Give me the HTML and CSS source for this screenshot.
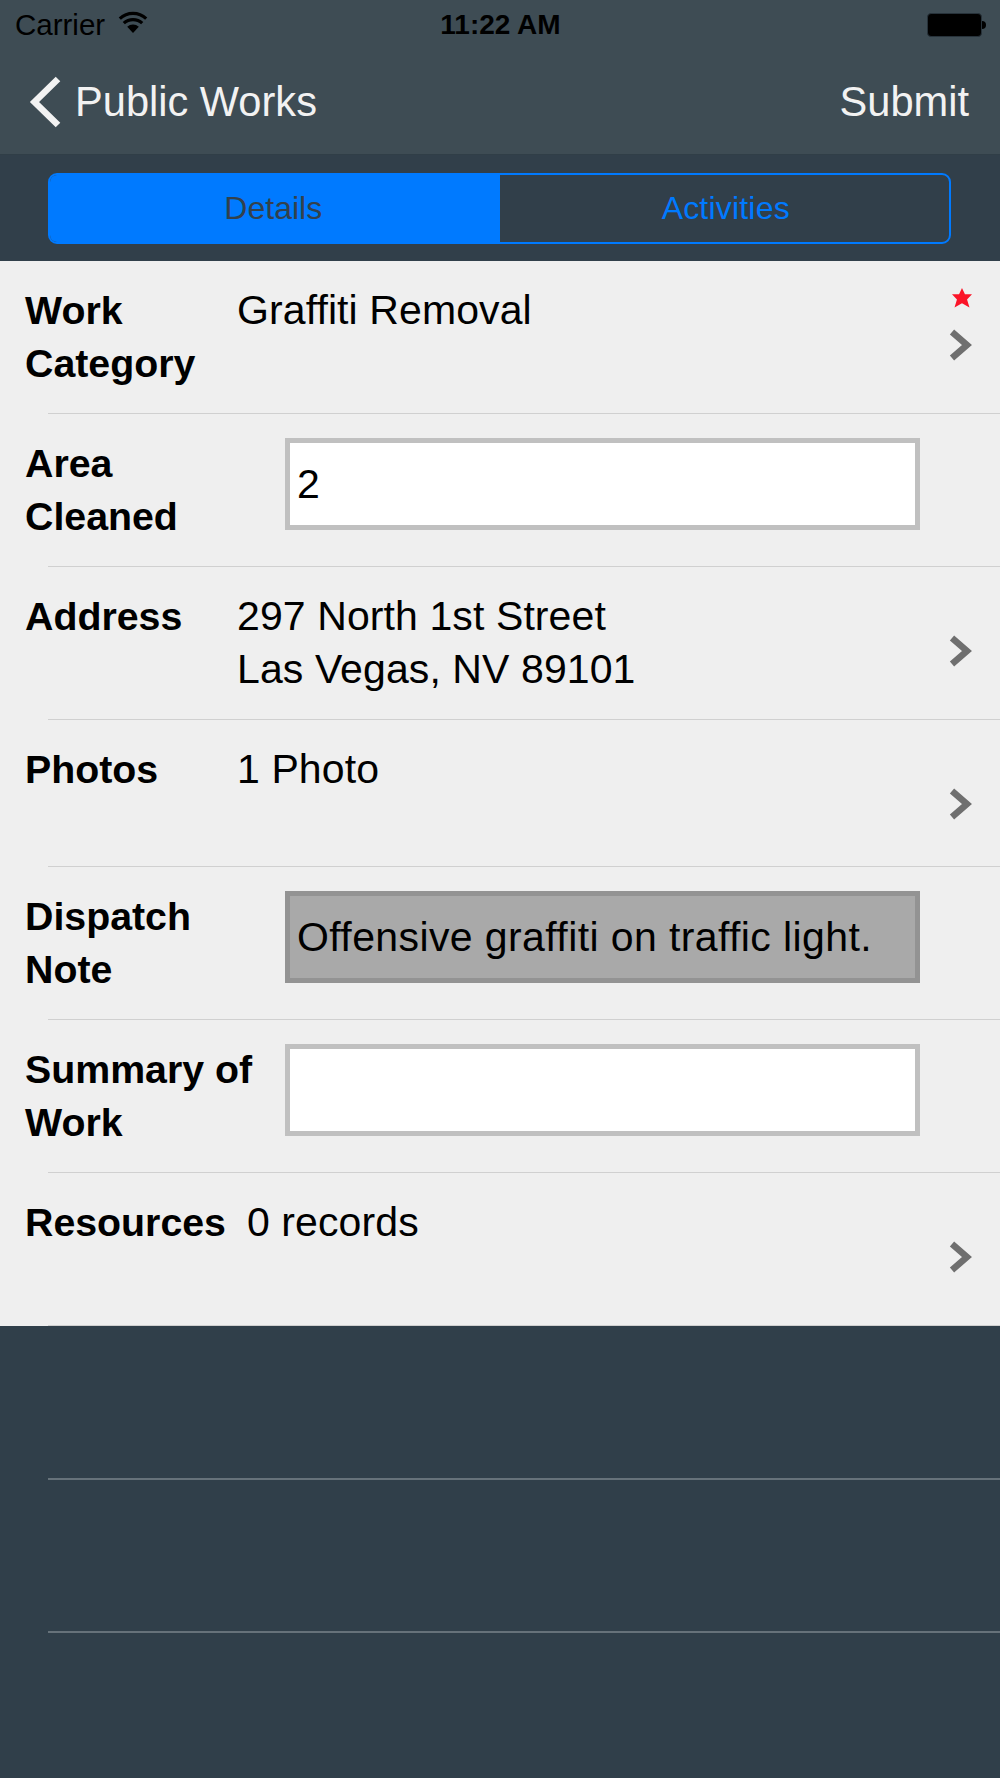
FILE: index.html
```html
<!DOCTYPE html>
<html lang="en">
<head>
<meta charset="utf-8">
<title>Public Works</title>
<link rel="stylesheet" href="styles.css">
</head>
<body>
<header class="top">
  <div class="status">
    <div class="status-left">
      <span class="carrier">Carrier</span>
      <svg class="wifi" width="30" height="24" viewBox="0 0 30 24"><path d="M15 23 9.200 16.800a8.400 8.400 0 0 1 11.600 0z" fill="#000"/><path d="M5.800 13.200a13.400 13.400 0 0 1 18.400 0M1.800 8.600a19.400 19.400 0 0 1 26.400 0" fill="none" stroke="#000" stroke-width="3.200"/></svg>
    </div>
    <span class="clock">11:22 AM</span>
    <div class="battery"><span class="battery-body"></span><span class="battery-nub"></span></div>
  </div>
  <nav class="nav">
    <a class="back">
      <svg width="32" height="52" viewBox="0 0 32 52"><path d="M29 3 5.500 26 29 49" fill="none" stroke="#f2f2f2" stroke-width="6.500"/></svg>
      <span>Public Works</span>
    </a>
    <a class="submit">Submit</a>
  </nav>
</header>
<div class="tabs-bar">
  <div class="tabs">
    <span class="tab tab-on">Details</span>
    <span class="tab tab-off">Activities</span>
  </div>
</div>
<main class="form">
  <section class="row">
    <div class="label">Work<br>Category</div>
    <div class="value">Graffiti Removal</div>
    <svg class="required" width="22" height="20" viewBox="0 0 20 19"><path d="M10 0l2.800 6L19.500 6l-4.700 5 2.300 7.500-7.100-4-7.100 4 2.300-7.500L.5 6l6.700 0z" fill="#fb1428"/></svg>
    <svg class="chev" width="24" height="32" viewBox="0 0 24 32"><path d="M4 3l15 13L4 29" fill="none" stroke="#6f6f6f" stroke-width="6.500"/></svg>
  </section>
  <section class="row row-input">
    <div class="label">Area<br>Cleaned</div>
    <div class="field">2</div>
  </section>
  <section class="row">
    <div class="label">Address</div>
    <div class="value">297 North 1st Street<br>Las Vegas, NV 89101</div>
    <svg class="chev" width="24" height="32" viewBox="0 0 24 32"><path d="M4 3l15 13L4 29" fill="none" stroke="#6f6f6f" stroke-width="6.500"/></svg>
  </section>
  <section class="row row-short">
    <div class="label">Photos</div>
    <div class="value">1 Photo</div>
    <svg class="chev" width="24" height="32" viewBox="0 0 24 32"><path d="M4 3l15 13L4 29" fill="none" stroke="#6f6f6f" stroke-width="6.500"/></svg>
  </section>
  <section class="row row-input">
    <div class="label">Dispatch<br>Note</div>
    <div class="field field-off">Offensive graffiti on traffic light.</div>
  </section>
  <section class="row row-input">
    <div class="label">Summary of<br>Work</div>
    <div class="field"></div>
  </section>
  <section class="row">
    <div class="label">Resources</div>
    <div class="value">0 records</div>
    <svg class="chev" width="24" height="32" viewBox="0 0 24 32"><path d="M4 3l15 13L4 29" fill="none" stroke="#6f6f6f" stroke-width="6.500"/></svg>
  </section>
</main>
<div class="empty-rows">
  <div class="empty-row"></div>
  <div class="empty-row"></div>
</div>
</body>
</html>
```
FILE: styles.css
```css
* { box-sizing: border-box; }

html, body { margin: 0; }

body {
  width: 1000px;
  height: 1778px;
  overflow: hidden;
  background: #303f4a;
  color: #000;
  font-family: "Liberation Sans", Arial, sans-serif;
}

/* status bar and navigation */
.top {
  height: 155px;
  background: #3e4c54;
  border-bottom: 1px solid #303e47;
}

.status {
  height: 50px;
  padding: 0 14px 0 15px;
  display: grid;
  grid-template-columns: 1fr auto 1fr;
  align-items: center;
}

.status-left { display: flex; align-items: center; gap: 13px; }
.carrier { font-size: 29.500px; }
.wifi { margin-top: -6px; }
.clock { font-size: 28px; font-weight: 700; }

.battery { justify-self: end; display: flex; align-items: center; }
.battery-body {
  width: 55px;
  height: 24px;
  background: #000;
  border: 1px solid #27323a;
  border-radius: 4px;
}
.battery-nub {
  width: 4px;
  height: 8px;
  background: #000;
  border-radius: 0 4px 4px 0;
}

.nav {
  height: 104px;
  padding: 0 31px 0 29px;
  display: flex;
  align-items: center;
  justify-content: space-between;
  color: #f2f2f2;
  font-size: 41.600px;
}
.back { display: flex; align-items: center; gap: 14px; }

/* segmented control */
.tabs-bar {
  height: 106px;
  padding: 18px 49px 17px 48px;
  background: #313f4a;
}
.tabs {
  height: 71px;
  display: grid;
  grid-template-columns: 1fr 1fr;
  border: 2.500px solid #007aff;
  border-radius: 9px;
  overflow: hidden;
  font-size: 32px;
  color: #007aff;
}
.tab { display: flex; align-items: center; justify-content: center; }
.tab-on { background: #007aff; color: #33414c; padding-right: 3px; }
.tab-off { padding-left: 3px; letter-spacing: 0.2px; }

/* form rows */
.form { background: #efefef; }

.row {
  position: relative;
  height: 153px;
  padding: 23px 0 0 25px;
  display: flex;
  font-size: 41px;
  line-height: 53px;
}
.row::after {
  content: "";
  position: absolute;
  left: 48px;
  right: 0;
  bottom: 0;
  height: 1px;
  background: #d0d0d0;
}
.row-short { height: 147px; }

.label {
  min-width: 191px;
  margin-right: 21px;
  font-weight: 700;
  font-size: 39.300px;
}
.value { letter-spacing: 0.1px; }
.row-input .label { width: 239px; margin-right: 21px; flex: none; }

.chev { position: absolute; right: 28px; top: 68px; filter: blur(0.7px); }
.required { position: absolute; right: 27px; top: 27px; filter: blur(0.5px); }

.field {
  width: 635px;
  height: 92px;
  margin-top: 1px;
  padding: 0 7px;
  display: flex;
  align-items: center;
  background: #fff;
  border: 5px solid #c0c0c0;
}
.field-off { background: #a9a9a9; border-color: #939393; letter-spacing: 0.4px; }

/* blank table rows under the form */
.empty-row {
  height: 153px;
  margin-left: 48px;
  border-bottom: 2px solid #66727a;
}
.empty-row:first-child { height: 154px; }
```
